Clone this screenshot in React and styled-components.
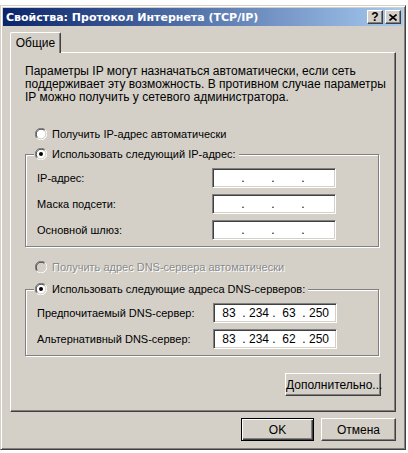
import React from "react";
import styled, { createGlobalStyle } from "styled-components";

const GlobalStyle = createGlobalStyle`
  html, body { margin: 0; padding: 0; background: #fff; }
  body {
    font-family: "Liberation Sans", Arial, sans-serif;
    font-size: 11px;
    color: #000;
  }
`;

const Window = styled.div`
  margin-top: 5px;
  width: 406px;
  height: 445px;
  box-sizing: border-box;
  background: #d4d0c8;
  border: 1px solid;
  border-color: #d4d0c8 #404040 #404040 #d4d0c8;
  box-shadow: inset 1px 1px 0 #fff, inset -1px -1px 0 #808080;
  padding: 2px;
  display: flex;
  flex-direction: column;
`;

const TitleBar = styled.div`
  height: 18px;
  display: flex;
  align-items: center;
  padding: 0 2px 0 2px;
  background: linear-gradient(to right, #0a246a, #a6caf0);
  color: #fff;
  font-family: "DejaVu Sans", "Liberation Sans", sans-serif;
  font-weight: bold;
  font-size: 11px;
`;

const TitleText = styled.div`
  flex: 1;
  padding-left: 1px;
  white-space: nowrap;
`;

const CaptionButton = styled.div`
  width: 16px;
  height: 14px;
  box-sizing: border-box;
  margin-left: ${(p) => (p.$gap ? "2px" : "0")};
  background: #d4d0c8;
  border: 1px solid;
  border-color: #fff #404040 #404040 #fff;
  box-shadow: inset -1px -1px 0 #808080;
  display: flex;
  align-items: center;
  justify-content: center;
  color: #000;
  font-family: "Liberation Sans", Arial, sans-serif;
  font-size: 12px;
  font-weight: bold;
  line-height: 1;
`;

const Content = styled.div`
  flex: 1;
  padding: 6px 7px 0 7px;
  display: flex;
  flex-direction: column;
`;

const TabStrip = styled.div`
  display: flex;
  height: 20px;
`;

const Tab = styled.div`
  position: relative;
  z-index: 1;
  width: 51px;
  height: 21px;
  box-sizing: border-box;
  background: #d4d0c8;
  border-top: 1px solid #fff;
  border-left: 1px solid #fff;
  border-right: 1px solid #404040;
  box-shadow: inset -1px 0 0 #808080;
  border-radius: 2px 2px 0 0;
  display: flex;
  align-items: center;
  justify-content: center;
  font-size: 12px;
`;

const Panel = styled.div`
  height: 360px;
  box-sizing: border-box;
  border: 1px solid;
  border-color: #fff #404040 #404040 #fff;
  box-shadow: inset -1px -1px 0 #808080;
  padding: 12px 16px 0 14px;
  display: flex;
  flex-direction: column;
`;

const Intro = styled.p`
  margin: 0;
  font-size: 12px;
  line-height: 13px;
  white-space: nowrap;
`;

const RadioRow = styled.div`
  display: flex;
  align-items: center;
  height: 16px;
  gap: 5px;
  margin-top: ${(p) => p.$top || 0}px;
  padding-left: ${(p) => (p.$inLegend ? 0 : 10)}px;
  color: ${(p) => (p.$disabled ? "#8a8a8a" : "#000")};
  text-shadow: ${(p) => (p.$disabled ? "1px 1px 0 #fff" : "none")};
  white-space: nowrap;
`;

const Group = styled.fieldset`
  margin: ${(p) => p.$top || 0}px 0 0 0;
  padding: 0;
  min-width: 0;
  border: 1px solid #808080;
  box-shadow: 1px 1px 0 #fff, inset 1px 1px 0 #fff;
`;

const Legend = styled.legend`
  margin-left: 8px;
  padding: 0 3px 0 1px;
  background: #d4d0c8;
`;

const GroupBody = styled.div`
  padding: 6px 11px 6px 11px;
  display: flex;
  flex-direction: column;
  gap: 6px;
`;

const FieldRow = styled.div`
  display: flex;
  align-items: center;
  height: 20px;
`;

const FieldLabel = styled.div`
  width: ${(p) => p.$w}px;
  white-space: nowrap;
`;

const IpBox = styled.div`
  width: 124px;
  height: 20px;
  box-sizing: border-box;
  background: #fff;
  border: 1px solid;
  border-color: #808080 #fff #fff #808080;
  box-shadow: inset 1px 1px 0 #404040, inset -1px -1px 0 #d4d0c8;
  display: flex;
  align-items: center;
  padding-left: 2px;
  font-size: 12px;
`;

const Segment = styled.span`
  width: 26px;
  text-align: center;
`;

const Dot = styled.span`
  width: 4px;
  text-align: center;
`;

const Button = styled.button`
  width: ${(p) => p.$w}px;
  height: 23px;
  box-sizing: border-box;
  padding: 0;
  font-family: inherit;
  font-size: 12px;
  color: #000;
  background: #d4d0c8;
  border: 1px solid;
  border-color: ${(p) => (p.$default ? "#000" : "#fff #404040 #404040 #fff")};
  box-shadow: ${(p) =>
    p.$default
      ? "inset 1px 1px 0 #fff, inset -1px -1px 0 #404040, inset -2px -2px 0 #808080"
      : "inset -1px -1px 0 #808080"};
`;

const AdvancedButton = styled(Button)`
  align-self: flex-end;
  margin-top: 17px;
  margin-right: -2px;
`;

const Footer = styled.div`
  display: flex;
  justify-content: flex-end;
  gap: 7px;
  margin-top: 6px;
`;

function Radio({ checked, disabled }) {
  return (
    <svg width="12" height="12" viewBox="0 0 12 12">
      <circle cx="6" cy="6" r="5" fill={disabled ? "#d4d0c8" : "#fff"} />
      <path d="M1.76 10.24 A6 6 0 0 1 10.24 1.76" stroke="#808080" strokeWidth="1" fill="none" />
      <path d="M2.47 9.53 A5 5 0 0 1 9.53 2.47" stroke="#404040" strokeWidth="1" fill="none" />
      <path d="M10.24 1.76 A6 6 0 0 1 1.76 10.24" stroke="#fff" strokeWidth="1" fill="none" />
      <path d="M9.53 2.47 A5 5 0 0 1 2.47 9.53" stroke="#d4d0c8" strokeWidth="1" fill="none" />
      {checked && <circle cx="6" cy="6" r="2" fill="#000" />}
    </svg>
  );
}

function IpField({ value }) {
  const parts = value || ["", "", "", ""];
  return (
    <IpBox>
      <Segment>{parts[0]}</Segment>
      <Dot>.</Dot>
      <Segment>{parts[1]}</Segment>
      <Dot>.</Dot>
      <Segment>{parts[2]}</Segment>
      <Dot>.</Dot>
      <Segment>{parts[3]}</Segment>
    </IpBox>
  );
}

export default function App() {
  return (
    <>
      <GlobalStyle />
      <Window>
        <TitleBar>
          <TitleText>Свойства: Протокол Интернета (TCP/IP)</TitleText>
          <CaptionButton>?</CaptionButton>
          <CaptionButton $gap>
            <svg width="8" height="7" viewBox="0 0 8 7">
              <path d="M0.5 0.5 L7.5 6.5 M7.5 0.5 L0.5 6.5" stroke="#000" strokeWidth="1.6" />
            </svg>
          </CaptionButton>
        </TitleBar>
        <Content>
          <TabStrip>
            <Tab>Общие</Tab>
          </TabStrip>
          <Panel>
            <Intro>
              Параметры IP могут назначаться автоматически, если сеть
              <br />
              поддерживает эту возможность. В противном случае параметры
              <br />
              IP можно получить у сетевого администратора.
            </Intro>
            <RadioRow $top={22}>
              <Radio />
              Получить IP-адрес автоматически
            </RadioRow>
            <Group $top={4}>
              <Legend>
                <RadioRow $inLegend>
                  <Radio checked />
                  Использовать следующий IP-адрес:
                </RadioRow>
              </Legend>
              <GroupBody>
                <FieldRow>
                  <FieldLabel $w={175}>IP-адрес:</FieldLabel>
                  <IpField />
                </FieldRow>
                <FieldRow>
                  <FieldLabel $w={175}>Маска подсети:</FieldLabel>
                  <IpField />
                </FieldRow>
                <FieldRow>
                  <FieldLabel $w={175}>Основной шлюз:</FieldLabel>
                  <IpField />
                </FieldRow>
              </GroupBody>
            </Group>
            <RadioRow $top={12} $disabled>
              <Radio disabled />
              Получить адрес DNS-сервера автоматически
            </RadioRow>
            <Group $top={6}>
              <Legend>
                <RadioRow $inLegend>
                  <Radio checked />
                  Использовать следующие адреса DNS-серверов:
                </RadioRow>
              </Legend>
              <GroupBody>
                <FieldRow>
                  <FieldLabel $w={176}>Предпочитаемый DNS-сервер:</FieldLabel>
                  <IpField value={["83", "234", "63", "250"]} />
                </FieldRow>
                <FieldRow>
                  <FieldLabel $w={176}>Альтернативный DNS-сервер:</FieldLabel>
                  <IpField value={["83", "234", "62", "250"]} />
                </FieldRow>
              </GroupBody>
            </Group>
            <AdvancedButton $w={96}>Дополнительно...</AdvancedButton>
          </Panel>
          <Footer>
            <Button $w={73} $default>
              OK
            </Button>
            <Button $w={75}>Отмена</Button>
          </Footer>
        </Content>
      </Window>
    </>
  );
}
